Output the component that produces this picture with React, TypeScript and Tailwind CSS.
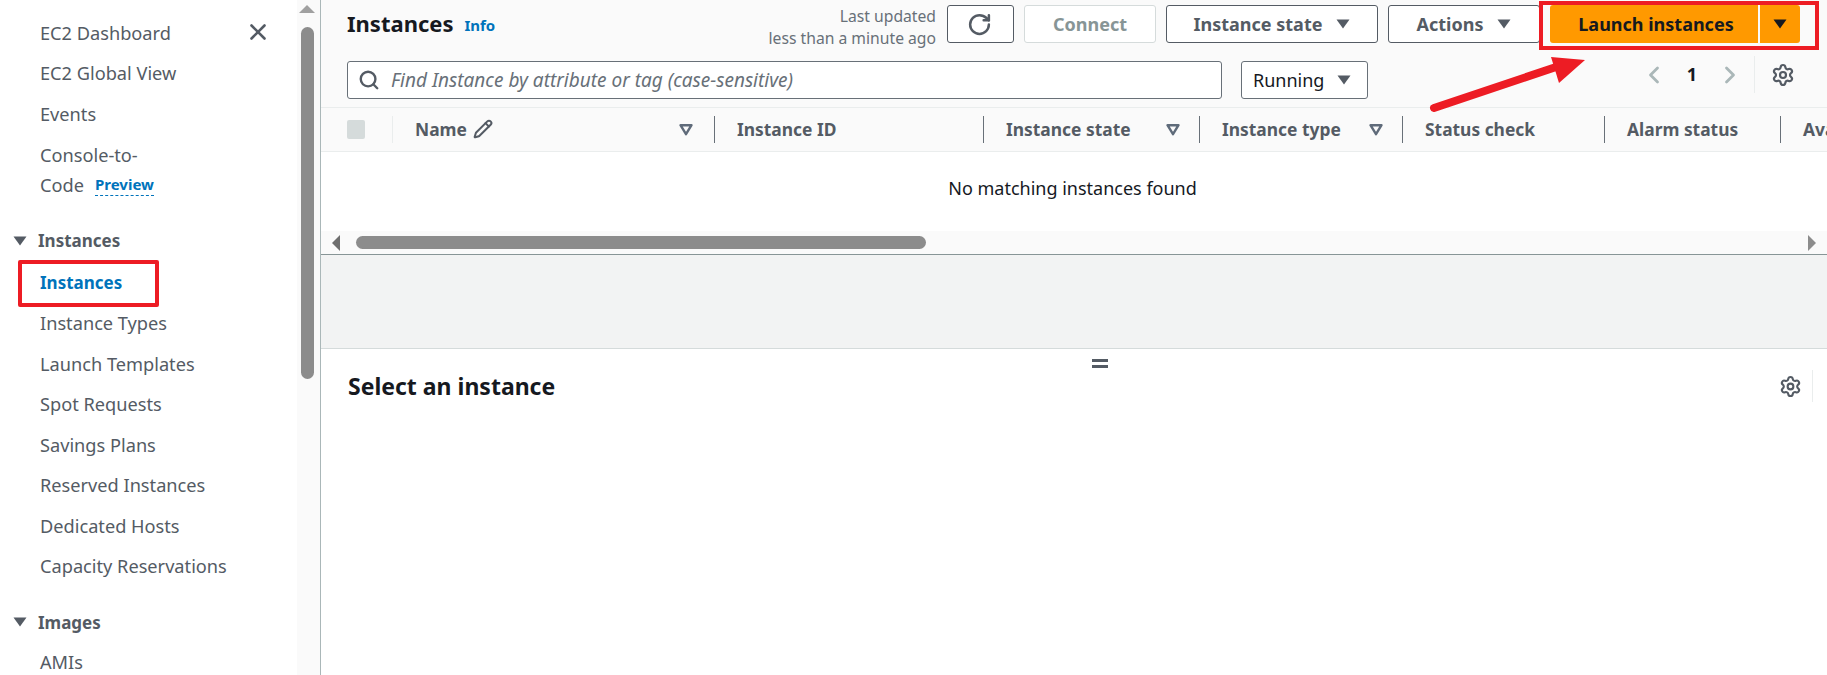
import { Search, Pencil, Settings, RotateCw, ChevronLeft, ChevronRight, X } from "lucide-react";

const Caret = ({ className = "" }: { className?: string }) => (
  <svg width="14" height="10" viewBox="0 0 14 10" className={className}>
    <path d="M0.5 0.5H13.5L7 9.5Z" fill="currentColor" />
  </svg>
);

const FilterIcon = () => (
  <svg width="14" height="12" viewBox="0 0 14 12" className="text-[#5f6b7a]">
    <path d="M1.5 1.2H12.5L7 10.2Z" fill="none" stroke="currentColor" strokeWidth="2.4" strokeLinejoin="round" />
  </svg>
);

const ScrollArrow = ({ points, className }: { points: string; className: string }) => (
  <svg width="10" height="16" viewBox="0 0 10 16" className={className}>
    <polygon points={points} fill="currentColor" />
  </svg>
);

const topLinks = ["EC2 Dashboard", "EC2 Global View", "Events"];
const instanceLinks = [
  "Instance Types",
  "Launch Templates",
  "Spot Requests",
  "Savings Plans",
  "Reserved Instances",
  "Dedicated Hosts",
  "Capacity Reservations",
];

const columns = [
  { label: "Instance ID", width: "w-[269px]", filter: false },
  { label: "Instance state", width: "w-[216px]", filter: true },
  { label: "Instance type", width: "w-[203px]", filter: true },
  { label: "Status check", width: "w-[202px]", filter: false },
  { label: "Alarm status", width: "w-[176px]", filter: false },
];

function NavRow({ label, active }: { label: string; active?: boolean }) {
  return (
    <div className={`flex h-[40.5px] items-center pl-10 ${active ? "text-[17px] font-bold text-[#0073bb]" : "text-[#545b64]"}`}>
      {label}
    </div>
  );
}

function NavSection({ label }: { label: string }) {
  return (
    <div className="flex h-[40.5px] items-center gap-[11px] pl-[13px] text-[17px] font-bold text-[#545b64]">
      <Caret />
      {label}
    </div>
  );
}

function Sidebar() {
  return (
    <aside className="relative h-[675px] w-[321px] shrink-0 overflow-hidden border-r border-[#aab7b8] bg-white">
      <div className="absolute top-0 right-0 flex h-full w-[23px] flex-col items-center bg-[#fafafa] pr-[3px]">
        <svg width="16" height="9" viewBox="0 0 16 9" className="mt-[5px] text-[#a0a0a0]">
          <polygon points="8,0 16,8 0,8" fill="currentColor" />
        </svg>
        <div className="mt-[13px] h-[352px] w-[13px] rounded-full bg-[#8c8c8c]" />
      </div>
      <X className="absolute top-[19px] left-[245px] text-[#545b64]" size={26} strokeWidth={2.4} />
      <div className="pt-[13px] text-[18.2px]">
        {topLinks.map((l) => (
          <NavRow key={l} label={l} />
        ))}
        <div className="pt-[5px] pl-10 leading-[30px] text-[#545b64]">
          <div>Console-to-</div>
          <div className="flex items-center gap-[11px]">
            Code
            <span className="border-b border-dashed border-[#0073bb] text-[15px] leading-[22px] font-bold text-[#0073bb]">
              Preview
            </span>
          </div>
        </div>
        <div className="mt-[21px]">
          <NavSection label="Instances" />
          <div className="pt-[1px]">
            <NavRow label="Instances" active />
            <div className="pt-[1px]">
              {instanceLinks.map((l) => (
                <NavRow key={l} label={l} />
              ))}
            </div>
          </div>
        </div>
        <div className="mt-[15px]">
          <NavSection label="Images" />
          <NavRow label="AMIs" />
        </div>
      </div>
    </aside>
  );
}

function OutlineButton({ label, width }: { label: string; width: string }) {
  return (
    <div className={`flex h-[38px] ${width} items-center justify-center gap-[14px] rounded-[3px] border border-[#545b64] bg-white text-[18px] font-bold text-[#545b64]`}>
      {label}
      <Caret className="text-[#545b64]" />
    </div>
  );
}

function Toolbar() {
  return (
    <div className="h-[108px] border-b border-[#eaeded] bg-[#fafafa] pl-[26px]">
      <div className="flex h-[47px] items-start pt-[5px]">
        <div className="flex h-[36px] flex-1 items-center gap-[11px]">
          <span className="text-[22px] font-bold text-[#16191f]">Instances</span>
          <span className="pt-[4px] text-[15px] font-bold text-[#0073bb]">Info</span>
        </div>
        <div className="mr-[11px] text-right text-[15.7px] leading-[22px] text-[#687078]">
          <div>Last updated</div>
          <div>less than a minute ago</div>
        </div>
        <div className="mr-[10px] flex h-[38px] w-[67px] items-center justify-center rounded-[3px] border border-[#545b64] bg-white pr-[2px] text-[#545b64]">
          <RotateCw size={25} strokeWidth={2.4} />
        </div>
        <div className="mr-[10px] flex h-[38px] w-[132px] items-center justify-center rounded-[3px] border border-[#d5dbdb] bg-white text-[18px] font-bold text-[#879596]">
          Connect
        </div>
        <div className="mr-[10px]">
          <OutlineButton label="Instance state" width="w-[212px]" />
        </div>
        <div className="mr-[10px]">
          <OutlineButton label="Actions" width="w-[152px]" />
        </div>
        <div className="mr-[27px] flex h-[38px] gap-[2px]">
          <div className="flex w-[208px] items-center justify-center rounded-l-[3px] bg-[#ff9900] pl-[4px] text-[18px] font-bold text-[#16191f]">
            Launch instances
          </div>
          <div className="flex w-[40px] items-center justify-center rounded-r-[3px] bg-[#ff9900] text-[#16191f]">
            <Caret />
          </div>
        </div>
      </div>
      <div className="flex items-start pt-[14px]">
        <div className="flex h-[38px] w-[875px] items-center gap-[11px] rounded-[3px] border border-[#687078] bg-white pl-[10px] text-[19px] whitespace-nowrap text-[#687078] italic">
          <Search size={22} strokeWidth={2.6} className="text-[#545b64]" />
          Find Instance by attribute or tag (case-sensitive)
        </div>
        <div className="ml-[19px] flex h-[38px] w-[127px] items-center justify-between rounded-[3px] border border-[#687078] bg-white pr-[16px] pl-[11px] text-[18px] text-[#16191f]">
          Running
          <Caret className="text-[#545b64]" />
        </div>
        <div className="ml-[272px] flex h-[37px] -translate-y-[5px] items-center">
          <ChevronLeft size={28} strokeWidth={2.4} className="text-[#aab7b8]" />
          <span className="w-[48px] text-center text-[18px] font-bold text-[#16191f]">1</span>
          <ChevronRight size={28} strokeWidth={2.4} className="text-[#aab7b8]" />
          <div className="ml-[10px] h-[37px] border-l border-[#eaeded]" />
          <Settings size={24} strokeWidth={2.2} className="ml-[16px] text-[#545b64]" />
        </div>
      </div>
    </div>
  );
}

function TableHead() {
  return (
    <div className="flex h-[44px] items-center overflow-hidden border-b border-[#eaeded] bg-[#fafafa] text-[17.4px] font-bold whitespace-nowrap text-[#545b64]">
      <div className="flex w-[72px] shrink-0 items-center pl-[26px]">
        <div className="h-[19px] w-[18px] rounded-[2px] bg-[#d5dbdb]" />
        <div className="ml-[27px] h-[27px] border-l border-[#eaeded]" />
      </div>
      <div className="flex h-[27px] w-[322px] shrink-0 items-center justify-between border-r border-[#687078] pr-[21px] pl-[22px]">
        <span className="flex items-center gap-[6px]">
          Name
          <Pencil size={20} strokeWidth={2.4} />
        </span>
        <FilterIcon />
      </div>
      {columns.map((c) => (
        <div key={c.label} className={`flex h-[27px] ${c.width} shrink-0 items-center justify-between border-r border-[#687078] pr-[19px] pl-[22px]`}>
          {c.label}
          {c.filter && <FilterIcon />}
        </div>
      ))}
      <div className="shrink-0 pl-[22px]">Availability Zone</div>
    </div>
  );
}

function TableBody() {
  return (
    <div>
      <div className="flex h-[79px] items-center justify-center bg-white pr-[3px] pb-[6px] text-[18px] text-[#16191f]">
        No matching instances found
      </div>
      <div className="flex h-[24px] items-center border-b border-[#879596] bg-[#fafafa] px-[10px]">
        <ScrollArrow points="9,0 9,16 1,8" className="text-[#6e6e6e]" />
        <div className="ml-[15px] h-[13px] w-[570px] rounded-full bg-[#8c8c8c]" />
        <ScrollArrow points="1,0 9,8 1,16" className="ml-auto text-[#8c8c8c]" />
      </div>
    </div>
  );
}

function Split() {
  return (
    <div className="flex-1 bg-white">
      <div className="flex justify-center pt-[10px] pl-[52px]">
        <div className="flex w-[16px] flex-col gap-[3px]">
          <div className="h-[3px] bg-[#545b64]" />
          <div className="h-[3px] bg-[#545b64]" />
        </div>
      </div>
      <div className="flex items-center justify-between pt-[1px] pl-[27px]">
        <h2 className="text-[23px] font-bold text-[#16191f]">Select an instance</h2>
        <div className="flex h-[32px] items-center gap-[10px] pr-[14px]">
          <Settings size={23} strokeWidth={2.2} className="text-[#545b64]" />
          <div className="h-full border-l border-[#eaeded]" />
        </div>
      </div>
    </div>
  );
}

// red markup drawn over the screenshot
function Annotations() {
  return (
    <>
      <div className="absolute top-[260px] left-[18px] h-[47px] w-[141px] rounded-[2px] border-[4px] border-[#ed1c24]" />
      <div className="absolute top-[1px] left-[1539px] h-[49px] w-[280px] border-[4px] border-[#ed1c24]" />
      <svg width="1827" height="675" className="pointer-events-none absolute top-0 left-0">
        <path d="M1434 108L1565 64" stroke="#ed1c24" strokeWidth="8" strokeLinecap="round" />
        <polygon points="1551,57 1585,60 1559,83" fill="#ed1c24" />
      </svg>
    </>
  );
}

export default function App() {
  return (
    <div className="relative flex h-[675px] w-[1827px] overflow-hidden bg-white font-['Noto_Sans',sans-serif]">
      <Sidebar />
      <main className="flex min-w-0 flex-1 flex-col">
        <Toolbar />
        <TableHead />
        <TableBody />
        <div className="h-[94px] border-b border-[#d5dbdb] bg-[#f2f3f3]" />
        <Split />
      </main>
      <Annotations />
    </div>
  );
}
